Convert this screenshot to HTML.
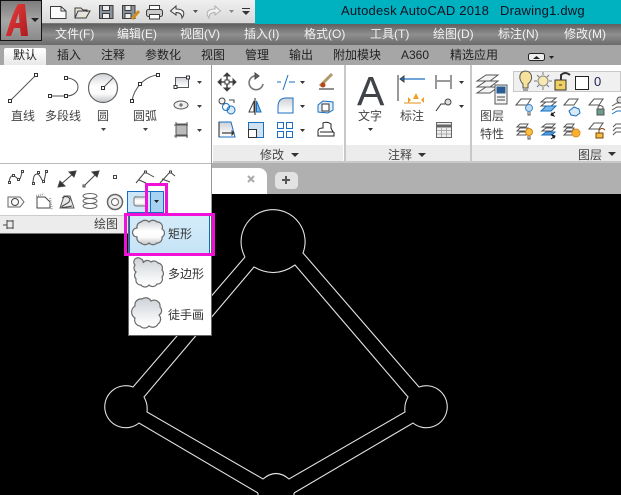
<!DOCTYPE html>
<html><head><meta charset="utf-8">
<style>
html,body{margin:0;padding:0;background:#000}
#p{position:relative;width:621px;height:495px;overflow:hidden;background:#000;font-family:"Liberation Sans","Noto Sans CJK SC",sans-serif;font-size:12px;color:#333}
#p div{position:absolute}
.t{position:absolute;white-space:nowrap;line-height:16px;height:16px}
.m{color:#f2f2f2;top:26px}
.r{color:#222;top:47px}
.c{transform:translateX(-50%);color:#444}
svg{position:absolute;left:0;top:0}
</style></head><body><div id="p">
<div style="left:0;top:0;width:621px;height:24px;background:#00b1c0"></div>
<div style="left:40px;top:0;width:215px;height:23px;background:linear-gradient(#f0f0f0,#d8d8d8);border-bottom:1px solid #777"></div>
<div style="left:0;top:24px;width:621px;height:21px;background:linear-gradient(#5f5f5f,#8f8f8f 50%,#6a6a6a)"></div>
<div style="left:0;top:45px;width:621px;height:20px;background:#a6a6a6"></div>
<div style="left:4px;top:48px;width:42px;height:17px;background:linear-gradient(#fff,#e8e8e8);border-radius:2px 2px 0 0"></div>
<div style="left:0;top:0;width:40px;height:39px;background:linear-gradient(#7c7c7c,#a6a6a6 50%,#8a8a8a);border:1px solid #111"></div>
<div style="left:0;top:65px;width:621px;height:98px;background:#fff"></div>
<div style="left:0;top:163px;width:621px;height:31px;background:#b0b0b0"></div>
<div style="left:213px;top:145px;width:130px;height:16px;background:#ececec"></div>
<div style="left:346px;top:145px;width:124px;height:16px;background:#ececec"></div>
<div style="left:472px;top:145px;width:149px;height:16px;background:#ececec"></div>
<div style="left:344px;top:65px;width:2px;height:98px;background:#c8c8c8"></div>
<div style="left:470px;top:65px;width:2px;height:98px;background:#c8c8c8"></div>
<div style="left:213px;top:161px;width:408px;height:2px;background:#c8c8c8"></div>
<div style="left:211px;top:168px;width:56px;height:26px;background:#fff;border-radius:0 8px 0 0"></div>
<div style="left:275px;top:172px;width:23px;height:17px;background:#e2e2e2;border-radius:5px 5px 4px 4px"></div>
<div style="left:0;top:163px;width:211px;height:70px;background:#fff;border-top:1px solid #bbb"></div>
<div style="left:211px;top:65px;width:1px;height:168px;background:#999"></div>
<div style="left:0;top:215px;width:211px;height:18px;background:#ececec;border-top:1px solid #ccc"></div>
<div style="left:0;top:233px;width:212px;height:1px;background:#777"></div>

<svg width="621" height="495" viewBox="0 0 621 495" fill="none">
<defs>
<linearGradient id="g" x1="0" y1="0" x2="0" y2="1"><stop offset="0" stop-color="#cfd2d6"/><stop offset=".45" stop-color="#ffffff"/><stop offset=".7" stop-color="#fbfbfb"/><stop offset="1" stop-color="#bfc2c6"/></linearGradient>
<linearGradient id="g2" x1="0" y1="0" x2="0" y2="1"><stop offset="0" stop-color="#cdd1d6"/><stop offset=".7" stop-color="#f4f5f6"/><stop offset="1" stop-color="#ffffff"/></linearGradient>
<linearGradient id="ra" x1="0" y1="0" x2="1" y2="1"><stop offset="0" stop-color="#e8403e"/><stop offset="1" stop-color="#b01a1e"/></linearGradient>
</defs>
<!-- drawing -->
<g stroke="#e2e2e2" stroke-width="1.1">
<path d="M245 257A32 32 0 1 1 303 253L419 387A21 21 0 1 1 413 423L294 493"/>
<path d="M245 257L133 387A21 21 0 1 0 139 423L258 493"/>
<path d="M254 267Q275 279 295 265L408 397Q404 404 405 412L289 479Q276 468 263 479L147 412Q148 404 144 397Z"/>
<path d="M258 493V495M294 493V495"/>
</g>
<!-- logo -->
<path d="M6 36C9 25 13 12 18 4H25L28 36H21L20 28H14L11 36ZM15.500 23H19.500L18.800 13Z" fill="url(#ra)" fill-rule="evenodd"/>
<path d="M31 18h8l-4 4z" fill="#222"/>
<!-- QAT -->
<g stroke="#3c3c3c" stroke-width="1">
<path d="M50.500 6.500H61L66 11V18.500H50.500Z" fill="#fafafa"/><path d="M61 6.500V11H66"/>
<path d="M75 18V8H81L83 10H87V12M75 18H86L90 11H78L75 18Z" fill="#e8e4d4"/>
<path d="M99.500 5.500H113V18.500H99.500Z" fill="#8a929c"/><rect x="102.500" y="5.500" width="7" height="5" fill="#eee"/><rect x="102.500" y="13.500" width="7" height="5" fill="#eee"/>
<path d="M122.500 5.500H135V18.500H122.500Z" fill="#8a929c"/><rect x="125" y="5.500" width="6" height="5" fill="#eee"/><rect x="125" y="13.500" width="6" height="5" fill="#eee"/>
<path d="M132 19L139 11" stroke="#d09020" stroke-width="3"/>
<rect x="149.500" y="5.500" width="10" height="5" fill="#fff"/><rect x="146.500" y="9.500" width="16" height="7" rx="2" fill="#ccc"/><rect x="149.500" y="14.500" width="10" height="4.500" fill="#fff"/>
<path d="M176 6L170.500 11L176 15V12.500C180 12.500 182 14 182 18C185 14 185 9 176 9Z" fill="#f0f0f0"/>
<path d="M215 6L220.500 11L215 15V12.500C211 12.500 209 14 209 18C206 14 206 9 215 9Z" fill="#f0f0f0" stroke="#b0b0b0"/>
</g>
<path d="M193 10h5l-2.500 3z" fill="#555"/><path d="M229 10h5l-2.500 3z" fill="#888"/>
<path d="M242 8h8v1h-8zM242 11h8l-4 4z" fill="#333"/>
<path d="M530.500 53.500h12a2 2 0 0 1 2 2v3a2 2 0 0 1-2 2h-12a2 2 0 0 1-2-2v-3a2 2 0 0 1 2-2z" fill="#eee" stroke="#222"/><path d="M533 59l3.500-3 3.500 3z" fill="#222"/><path d="M549 56h5l-2.500 3z" fill="#222"/>

<!-- draw panel -->
<g stroke="#555" stroke-width="1">
<path d="M10 101L36 75"/>
<path d="M50 96H66C82 96 82 78 66 78"/>
<circle cx="103" cy="88" r="14.500" fill="url(#g)" stroke="#666" stroke-width="1.200"/><path d="M103 88L113 78"/>
<path d="M132 101C134 88 145 76 158 75"/>
<rect x="175.500" y="77.500" width="13" height="10" fill="url(#g2)"/>
<ellipse cx="181" cy="105" rx="7" ry="4" fill="#eee"/><path d="M179 105h4M181 103v4"/>
<rect x="176" y="124" width="11" height="11" fill="#bbb"/><path d="M174 125H188M174 136H188M176 122V138M187 122V138"/>
</g>
<g fill="#fff" stroke="#333"><rect x="8.500" y="99.500" width="3" height="3"/><rect x="34.500" y="73.500" width="3" height="3"/><rect x="48.500" y="94.500" width="3" height="3"/><rect x="64.500" y="94.500" width="3" height="3"/><rect x="64.500" y="76.500" width="3" height="3"/><rect x="101.500" y="86.500" width="3" height="3"/><rect x="130.500" y="99.500" width="3" height="3"/><rect x="138.500" y="82.500" width="3" height="3"/><rect x="156.500" y="73.500" width="3" height="3"/><rect x="174" y="85.500" width="3" height="3"/><rect x="186.500" y="76" width="3" height="3"/></g>
<path d="M101 128h5l-2.500 3zM143 128h5l-2.500 3zM197 81h5l-2.500 3zM197 105h5l-2.500 3zM197 129h5l-2.500 3z" fill="#444"/>
<!-- lower row -->
<g stroke="#444" stroke-width="1">
<path d="M9 183C10 172 15 176 18 179S21 172 23 171"/>
<path d="M33 184C33 172 38 172 41 178S44 182 46 172"/>
<g fill="#fff"><rect x="8.500" y="181.500" width="2" height="2"/><rect x="12.500" y="174.500" width="2" height="2"/><rect x="17.500" y="178.500" width="2" height="2"/><rect x="21.500" y="170.500" width="2" height="2"/><rect x="32.500" y="182.500" width="2" height="2"/><rect x="37.500" y="171.500" width="2" height="2"/><rect x="42.500" y="180.500" width="2" height="2"/><rect x="45.500" y="170.500" width="2" height="2"/></g>
<path d="M59 186L75 172"/><path d="M58 187l7-1-5-5zM76 171l-7 1 5 5z" fill="#333"/>
<path d="M84 186L98 172"/><path d="M99 171l-7 1 5 5z" fill="#333"/><rect x="83" y="185" width="2" height="2" fill="#fff"/>
<rect x="113.500" y="175.500" width="3" height="3" fill="#fff"/>
<path d="M136 183L145 172L154 177M139 180L146 183"/><path d="M160 183L170 172L175 176M162 179L170 182"/>
<rect x="144.500" y="171" width="2" height="2" fill="#fff"/><rect x="169.500" y="171" width="2" height="2" fill="#fff"/>
<path d="M8 197H20L24 202L20 207H8Z" fill="#fafafa" stroke="#666"/><circle cx="15" cy="202" r="3.500"/>
<path d="M37 197H45L50 202V208H37Z" stroke="#444"/><path d="M36 196L44 194M50 198L52 210" stroke="#aaa" stroke-dasharray="1 1" stroke-width="2"/>
<path d="M60 208L64 196H70L74 208Z" fill="#e8e8e8" stroke="#555"/><path d="M62 198C68 194 74 200 66 204S62 208 72 206"/>
<g stroke="#666"><ellipse cx="90" cy="196" rx="7" ry="2.500"/><ellipse cx="90" cy="201" rx="7" ry="2.500"/><ellipse cx="90" cy="206" rx="7" ry="2.500"/></g>
<circle cx="115" cy="202" r="7.500" stroke="#666" stroke-width="1.500" fill="#eee"/><circle cx="115" cy="202" r="3.500" fill="#fff" stroke="#666"/>
</g>
<rect x="127.500" y="191.500" width="36" height="21" fill="#cde6f8" stroke="#1a6fc0"/>
<rect x="150.500" y="191.500" width="13" height="21" fill="#a8d2f2" stroke="#1a6fc0"/>
<path d="M134 199A2 2 0 0 1 137 197H145A2 2 0 0 1 147 199V204A2 2 0 0 1 145 206H136A2 2 0 0 1 134 204Z" fill="url(#g)" stroke="#777"/>
<path d="M154 200h5l-2.500 3z" fill="#222"/>
<!-- pin -->
<path d="M3 225H7M7 220V229M7 221H13V228H7M13 220v9" stroke="#444"/>
<!-- modify icons -->
<g stroke="#444" stroke-width="1">
<path d="M220 82H234M227 75V89" stroke-width="1.500"/><path d="M227 73l-3 3h6zM227 91l-3-3h6zM218 82l3-3v6zM236 82l-3-3v6z" fill="#333"/><rect x="225" y="80" width="4" height="4" fill="#fff"/>
<path d="M263 84A7 7 0 1 1 258 76" stroke="#777" stroke-width="1.600"/><path d="M255 73l4 3-4 3z" fill="#666"/>
<path d="M288 75L283 90" stroke="#1a6fc0"/><path d="M277 82H281M289 82H295" stroke="#1a6fc0"/>
<path d="M320 86L332 74" stroke="#b09868" stroke-width="3"/><circle cx="323" cy="85" r="2.500" fill="#b84818" stroke="none"/><path d="M319 89H334" stroke="#222"/>
<circle cx="222" cy="101" r="3" fill="#f4f4f4"/><circle cx="231" cy="110" r="4" stroke="#1a6fc0" fill="#d8eaf8"/><circle cx="226" cy="107" r="3.500" stroke="#1a6fc0"/><path d="M229 100h5v3"/>
<path d="M249 112L254 101V112Z" fill="#fff"/><path d="M261 112L256.500 101V112Z" fill="#7fb8e0" stroke="#1a6fc0"/><path d="M255 98V115" stroke="#222"/>
<path d="M278 113V107Q278 98 286 98H293V113Z" fill="url(#g2)" stroke="#1a6fc0"/>
<path d="M318 105V112L328 113L333 110V102L323 101Z" stroke="#1a6fc0" fill="#e0eef8"/><rect x="322" y="104" width="7" height="7" stroke="#333" fill="#fff"/>
<path d="M219 122H231L235 137H219Z" fill="url(#g2)" stroke="#1a6fc0"/><path d="M222 133H232" stroke="#111"/><path d="M232 131l2 2-2 2z" fill="#111"/><path d="M219 122V137" stroke="#222"/>
<rect x="248.500" y="122.500" width="15" height="15" stroke="#1a6fc0" fill="#cfe2f2"/><rect x="248.500" y="129.500" width="8" height="8" fill="#fff" stroke="#333"/>
<g stroke="#1a6fc0" fill="#fff"><rect x="277.500" y="122.500" width="6" height="6"/><rect x="286.500" y="122.500" width="6" height="6"/><rect x="277.500" y="131.500" width="6" height="6"/><rect x="286.500" y="131.500" width="6" height="6"/></g>
<path d="M318 131Q318 128 323 128V123Q327 121 331 124V128L333 132H334M318 131V136H334V132M320 132H334" stroke="#222"/>
<!-- annotation right -->
<path d="M436 75V89M451 75V89M437 81H450" stroke="#333"/>
<path d="M436 111L441 104H445" stroke="#333"/><circle cx="448" cy="102" r="3" fill="#ddd"/>
<rect x="436.500" y="122.500" width="15" height="15" fill="#eee" stroke="#666"/><path d="M437 126H451" stroke="#666" stroke-width="3"/><path d="M441.500 127V137M446.500 127V137M437 130.500H451M437 134H451" stroke="#aaa"/>
<!-- dim icon -->
<path d="M398 75V101" stroke="#333"/><path d="M400 79H425" stroke="#1a6fc0" stroke-width="1.200"/><path d="M400 79l4-3v6z" fill="#1a6fc0"/>
</g>
<path d="M300 81h5l-2.500 3zM300 105h5l-2.500 3zM300 129h5l-2.500 3zM459 81h5l-2.500 3zM459 105h5l-2.500 3zM291 153h8l-4 4zM368 128h5l-2.500 3zM418 153h8l-4 4zM608 152h8l-4 4z" fill="#333"/>
<path d="M408 97l3 3-3 3zM416 93l3 6h-6zM424 97l-3 3 3 3z" fill="#f0a020"/>
<path d="M404 103h17" stroke="#e09018"/>
<!-- X and plus -->
<path d="M248 176L254 182M254 176L248 182" stroke="#aaa" stroke-width="2"/>
<path d="M282 180H290M286 176V184" stroke="#555" stroke-width="2"/>
<!-- layer properties icon -->
<g stroke="#555" fill="#f4f4f4">
<path d="M477 93L486 87H498L490 93Z"/>
<path d="M477 87L486 81H498L490 87Z"/>
<path d="M477 81L486 75H498L490 81Z"/>
<rect x="495" y="85" width="12" height="19" fill="#f4f4f4"/><rect x="497" y="87" width="8" height="6" fill="#2a5d95" stroke="#2a5d95"/>
<path d="M497 97H505M497 100H505" stroke="#444" fill="none"/>
</g>
</svg>
<div style="left:513px;top:71px;width:108px;height:21px;background:#f0f0f0;border:1px solid #c8c8c8;box-sizing:border-box"></div>
<svg width="621" height="495" viewBox="0 0 621 495" fill="none">
<path d="M523 88V84C518 79 519 72 525 71C532 71 534 79 528 84V88Z" fill="#f6e29a" stroke="#555"/>
<path d="M523 90H528" stroke="#555"/>
<circle cx="543" cy="81" r="5" fill="#f6e8b0" stroke="#888"/><path d="M543 72V75M543 87V90M534 81H537M549 81H552M537 75L539 77M549 75L547 77M537 87L539 85M549 87L547 85" stroke="#777"/>
<rect x="555" y="80" width="11" height="10" fill="#f0d060" stroke="#333"/><path d="M561 80V75Q565 71 570 75" stroke="#333" stroke-width="2"/>
<path d="M559 85H562" stroke="#333"/>
<rect x="575.500" y="76.500" width="13" height="13" fill="#fff" stroke="#222"/>
<g stroke="#555" fill="#fff">
<path d="M516 105L521 99H531L527 105Z"/><circle cx="529" cy="108" r="3.500" fill="#bcdcf4" stroke="#4488c4"/><path d="M528 112V115H530V112" />
<path d="M541 102L546 98H556L551 102ZM541 106L546 102H556L551 106Z"/><path d="M541 111L546 106H556L551 111Z" fill="#7ab8e8" stroke="#1a6fc0"/>
<path d="M564 105L569 99H578L574 105Z"/><path d="M574 107l5 2 1 4-4 3-5-1-2-4z" fill="#d8eaf8" stroke="#1a6fc0"/>
<path d="M589 105L594 99H603L599 105Z"/><rect x="597" y="109" width="7" height="6" fill="#6a9a90"/><path d="M598 109V107Q600 104 603 107V109" fill="none"/>
<path d="M612 106L617 103H621M612 110L617 107H621"/><circle cx="620" cy="100" r="3" fill="#ddd"/><path d="M612 114L617 111H621" stroke="#1a6fc0"/>
<path d="M517 127L520 124H528L526 127ZM517 131L520 128H528L526 131ZM517 135L520 132H528L526 135Z"/><circle cx="529" cy="132" r="3.500" fill="#f8c040" stroke="#d08018"/><path d="M528 136V139H530V136"/>
<path d="M542 127L546 124H555L552 127ZM542 131L546 128H555L552 131Z"/><path d="M542 135L546 132H555L552 135Z" fill="#5a9cd8" stroke="#1a6fc0"/>
<path d="M564 127L567 124H574L572 127ZM564 131L567 128H574L572 131ZM564 135L567 132H574L572 135Z"/><circle cx="576" cy="133" r="4" fill="#f8b030" stroke="#e08820"/>
<path d="M589 129L594 123H603L599 129Z"/><rect x="596" y="133" width="7" height="5" fill="#f0c040" stroke="#804010"/><path d="M599 133V130Q602 127 605 130" fill="none" stroke="#804010"/>
<path d="M613 127L616 124H621M613 131L616 128H621M613 135L616 132H621"/>
</g>
<path d="M555 112l-4 3M551 115l3 1-2-3z" stroke="#111"/><path d="M551 139l4-3M555 136l-3-1 2 3z" stroke="#111"/>
</svg>

<svg width="621" height="495" viewBox="0 0 621 495" fill="none" style="z-index:3">
<text x="357" y="105" font-family="Liberation Sans" font-size="41" fill="#404448" style="font-weight:400">A</text>
</svg>

<span class="t m" style="left:55px">文件(F)</span>
<span class="t m" style="left:117px">编辑(E)</span>
<span class="t m" style="left:180px">视图(V)</span>
<span class="t m" style="left:244px">插入(I)</span>
<span class="t m" style="left:304px">格式(O)</span>
<span class="t m" style="left:370px">工具(T)</span>
<span class="t m" style="left:433px">绘图(D)</span>
<span class="t m" style="left:498px">标注(N)</span>
<span class="t m" style="left:564px">修改(M)</span>
<span class="t" style="left:341px;top:3px;font-size:13px;color:#112;letter-spacing:.2px">Autodesk AutoCAD 2018</span>
<span class="t" style="left:500px;top:3px;font-size:13px;color:#112;letter-spacing:.2px">Drawing1.dwg</span>
<span class="t r" style="left:13px">默认</span>
<span class="t r" style="left:57px">插入</span>
<span class="t r" style="left:101px">注释</span>
<span class="t r" style="left:145px">参数化</span>
<span class="t r" style="left:201px">视图</span>
<span class="t r" style="left:245px">管理</span>
<span class="t r" style="left:289px">输出</span>
<span class="t r" style="left:333px">附加模块</span>
<span class="t r" style="left:401px">A360</span>
<span class="t r" style="left:450px">精选应用</span>
<span class="t c" style="left:23px;top:108px">直线</span>
<span class="t c" style="left:63px;top:108px">多段线</span>
<span class="t c" style="left:103px;top:108px">圆</span>
<span class="t c" style="left:145px;top:108px">圆弧</span>
<span class="t c" style="left:370px;top:108px">文字</span>
<span class="t c" style="left:412px;top:108px">标注</span>
<span class="t c" style="left:492px;top:108px">图层</span>
<span class="t c" style="left:492px;top:126px">特性</span>
<span class="t c" style="left:272px;top:147px">修改</span>
<span class="t c" style="left:400px;top:147px">注释</span>
<span class="t c" style="left:590px;top:147px">图层</span>
<span class="t c" style="left:106px;top:216px">绘图</span>
<span class="t" style="left:594px;top:74px;font-size:13px;color:#225">0</span>

<div style="left:128px;top:213px;width:82px;height:121px;background:#fff;border:1px solid #666;z-index:4"></div>
<div style="left:129px;top:215px;width:79px;height:37px;background:linear-gradient(#d4ecfa,#c6e4f6);border:1px solid #0f6cc0;z-index:4"></div>
<span class="t" style="left:168px;top:226px;z-index:6;color:#333">矩形</span>
<span class="t" style="left:168px;top:266px;z-index:6;color:#333">多边形</span>
<span class="t" style="left:168px;top:307px;z-index:6;color:#333">徒手画</span>
<svg width="621" height="495" viewBox="0 0 621 495" style="z-index:5" fill="none">
<g stroke="#6a6a6a" stroke-width="1.200">
<path d="M137 228A5 5 0 0 1 141 222A5.500 5.500 0 0 1 149 222A5.500 5.500 0 0 1 157 222A5 5 0 0 1 162 229A4.500 4.500 0 0 1 162 237A5 5 0 0 1 157 243A5.500 5.500 0 0 1 149 243A5.500 5.500 0 0 1 141 243A5 5 0 0 1 137 237A4.500 4.500 0 0 1 137 228Z" fill="url(#g)"/>
<path d="M135 265A4 4 0 0 1 141 259A3 3 0 0 1 143 263A5 5 0 0 1 151 262A5 5 0 0 1 158 263A5 5 0 0 1 162 270A5 5 0 0 1 162 277A5 5 0 0 1 157 284A5 5 0 0 1 149 285A5 5 0 0 1 141 285A5 5 0 0 1 136 279A5 5 0 0 1 136 272A5 5 0 0 1 135 265Z" fill="url(#g2)"/>
<path d="M135 306A6 6 0 0 1 142 299A6 6 0 0 1 151 301A6 6 0 0 1 160 307A5 5 0 0 1 159 315A6 6 0 0 1 158 324A6 6 0 0 1 149 326A6 6 0 0 1 140 326A6 6 0 0 1 135 318A7 7 0 0 1 135 306Z" fill="url(#g2)"/>
</g>
</svg>
<div style="left:124px;top:213px;width:85px;height:37px;border:3px solid #f010d8;z-index:7"></div>
<div style="left:145px;top:183px;width:23px;height:3px;background:#f010d8;z-index:7"></div>
<div style="left:145px;top:183px;width:3px;height:30px;background:#f010d8;z-index:7"></div>
<div style="left:165px;top:183px;width:3px;height:30px;background:#f010d8;z-index:7"></div>
</div></body></html>
